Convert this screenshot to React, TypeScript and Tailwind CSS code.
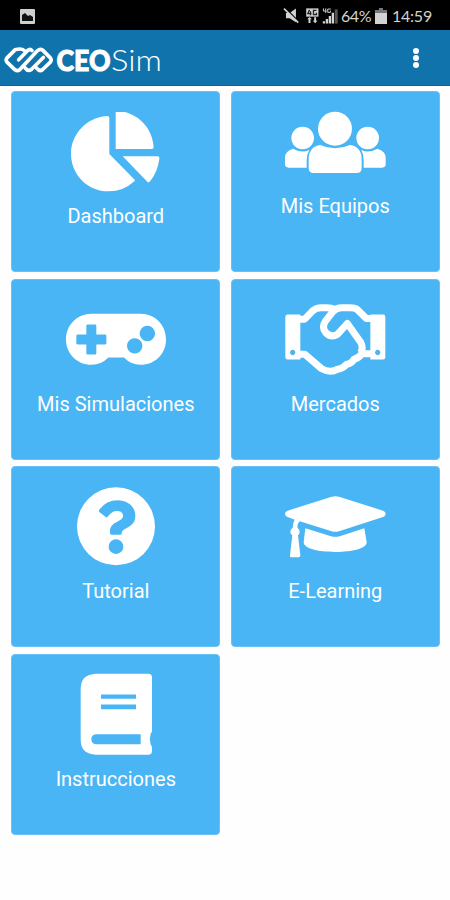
import type { ReactNode } from "react";

interface MenuItem {
  label: string;
  icon: ReactNode;
}

/* ================= MENU ICONS ================= */

const PieIcon = () => (
  <svg viewBox="197 82 300 240" className="h-20 w-[100px] fill-white">
    <path d="M327 99 V208 L403 285 Q405 288 402 290 Q370 320 325 320 C262 320 212 270 212 207 C212 148 260 98 319 94 Q327 94 327 99Z" />
    <path d="M346 84 Q347 78 354 79 C412 84 456 128 460 187 Q460 193 454 193 H346Z" />
    <path d="M367 215 H471 Q478 215 477 222 Q472 263 448 291 Q445 295 441 291Z" />
  </svg>
);

const UsersIcon = () => (
  <svg viewBox="180 80 300 210" className="h-[70px] w-[100px] overflow-visible fill-white">
    <circle cx="233" cy="158" r="34" />
    <circle cx="428" cy="158" r="34" />
    <circle cx="330" cy="130" r="51" />
    <path d="M204 190 Q233 206 253 193 Q245 208 245 225 V247 H191 Q180 247 180 237 V217 Q180 197 204 190Z" />
    <path d="M457 190 Q428 206 409 193 Q416 208 416 225 V247 H471 Q482 247 482 237 V217 Q482 197 457 190Z" />
    <path d="M286 179 Q330 199 375 179 Q410 184 410 222 V248 Q410 263 395 263 H266 Q251 263 251 248 V222 Q251 184 286 179Z" />
  </svg>
);

const GamepadIcon = () => (
  <svg viewBox="197 73.5 300 240" className="h-20 w-[100px]">
    <path
      fillRule="evenodd"
      className="fill-white"
      d="M273 115 H421 C464 115 497 149 497 192 C497 235 464 268 421 268 Q392 268 371 246 H324 Q303 268 273 268 C231 268 197 235 197 192 C197 149 231 115 273 115Z M262 147 Q258 147 258 151 V177 H232 Q228 177 228 181 V203 Q228 207 232 207 H258 V233 Q258 237 262 237 H284 Q288 237 288 233 V207 H314 Q318 207 318 203 V181 Q318 177 314 177 H288 V151 Q288 147 284 147Z M403 188 a23 23 0 1 0 .1 0Z M441 151 a23 23 0 1 0 .1 0Z"
    />
  </svg>
);

const HandshakeIcon = () => (
  <svg viewBox="180 73.5 300 240" className="h-20 w-[100px] overflow-visible">
    <path
      fillRule="evenodd"
      className="fill-white"
      d="M188 117 H226 V252 H188 Q181 252 181 245 V124 Q181 117 188 117Z M203 223 a8 8 0 1 0 .1 0Z M474 117 H436 V252 H474 Q481 252 481 245 V124 Q481 117 474 117Z M458 223 a8 8 0 1 0 .1 0Z"
    />
    <g className="fill-none stroke-white" strokeWidth="21" strokeLinejoin="round">
      <path d="M222 131 H239 L263 106 Q274 97 288 97 H306 Q319 97 329 102" />
      <path d="M440 129 H424 L399 104 Q391 97 376 97 H350 Q334 97 323 109 L302 136 Q289 155 302 171 Q318 188 338 176 L367 144 L407 200 Q416 217 407 232" />
      <path d="M440 235 H410 Q402 248 387 251 Q382 263 364 267 Q354 279 338 281 Q315 294 289 279 L239 236 H222" />
    </g>
  </svg>
);

const QuestionIcon = () => (
  <svg viewBox="197 82 300 240" className="h-20 w-[100px]">
    <circle cx="347" cy="200" r="117" className="fill-white" />
    <path
      className="fill-[#49b5f5]"
      d="M297 157 Q294 153 298 149 Q318 122 352 122 C382 122 405 141 405 168 C405 207 364 201 364 222 Q364 225 359 225 H334 Q329 225 329 220 V216 C329 183 368 188 368 168 C368 158 360 154 348 154 Q335 154 322 171 Q319 175 315 171Z"
    />
    <circle cx="347" cy="261" r="22" className="fill-[#49b5f5]" />
  </svg>
);

const GraduationIcon = () => (
  <svg viewBox="180 81 300 240" className="h-20 w-[100px] overflow-visible fill-white">
    <path d="M320 110 Q331 107 342 110 L474 152 Q482 155 482 161 Q482 168 474 171 L342 214 Q331 217 320 214 L224 184 Q217 190 217 203 Q224 208 224 215 Q224 222 219 226 L226 286 Q226 292 221 292 H199 Q194 292 195 286 L202 226 Q196 222 196 215 Q196 207 203 203 Q203 189 209 179 L188 171 Q180 168 180 161 Q180 155 188 152Z" />
    <path d="M241 205 L318 229 Q331 232 344 229 L418 205 L425 247 C425 266 382 276 331 276 C278 276 236 265 236 247Z" />
  </svg>
);

const BookIcon = () => (
  <svg viewBox="197 89.5 300 240" className="h-20 w-[100px] overflow-visible">
    <path
      fillRule="evenodd"
      className="fill-white"
      d="M287 86 H444 Q455 86 455 97 V257 Q455 262 451 266 Q446 282 451 298 Q455 302 455 309 V317 Q455 329 444 329 H287 Q241 327 241 284 V131 Q241 88 287 86Z M302 148 V161 H407 V148Z M302 178 V192 H407 V178Z M287 267 Q273 268 273 282 Q273 296 287 297 H421 V267Z"
    />
  </svg>
);

const items: MenuItem[] = [
  { label: "Dashboard", icon: <PieIcon /> },
  { label: "Mis Equipos", icon: <UsersIcon /> },
  { label: "Mis Simulaciones", icon: <GamepadIcon /> },
  { label: "Mercados", icon: <HandshakeIcon /> },
  { label: "Tutorial", icon: <QuestionIcon /> },
  { label: "E-Learning", icon: <GraduationIcon /> },
  { label: "Instrucciones", icon: <BookIcon /> },
];

/* ================= STATUS BAR ================= */

const StatusBar = () => (
  <div className="flex h-[30px] items-center bg-black pl-5 pr-[18px] pt-0.5 font-['Lato',sans-serif] text-[16px] leading-none text-[#d2d2d2]">
    <svg viewBox="0 0 15 15" className="h-[15px] w-[15px]">
      <rect width="15" height="15" rx="1" fill="#cfcfcf" />
      <path d="M2 12 V6 L5 4 L8 7 L10 6 L13 8 V12Z" fill="#111" />
    </svg>
    <svg viewBox="168 20 172 54" className="ml-auto h-[18px] w-[57px]" fill="#d2d2d2">
      <path d="M177 38 H188 L207 24 V66 L188 54 H177Z" />
      <path d="M174 23 L215 64" stroke="#000" strokeWidth="5" />
      <path d="M171 25 L214 67" stroke="#d2d2d2" strokeWidth="5" />
      <rect x="238" y="24" width="37" height="25" />
      <path d="M248 28 L243 40 H254 M251 33 V45 M269 30 H260 V43 H269 V37" fill="none" stroke="#222" strokeWidth="4" />
      <path d="M241 57 L248 50 L255 57 H251 V68 H245 V57Z M258 61 H262 V51 H268 V61 H272 L265 69Z" />
      <path d="M290 24 V32 H299 M297 24 V38 M312 26 H303 V36 H311 V31" fill="none" stroke="#d2d2d2" strokeWidth="3" />
      <path d="M288 70 V63 H295 V70Z M297 70 V56 H304 V70Z M306 70 V47 H313 V70Z M315 70 V37 H322 V70Z" />
      <path d="M324 70 V27 H333 V70Z" fill="#555" />
    </svg>
    <span className="ml-[1px] w-[34px] tracking-[-0.3px]">64%</span>
    <svg viewBox="0 0 12 16" className="h-4 w-3">
      <path d="M4 0 H8 V2 H12 V6 H0 V2 H4Z" fill="#777" />
      <path d="M0 5 H12 V16 H0Z" fill="#d2d2d2" />
    </svg>
    <span className="ml-[5px] tracking-[-0.2px]">14:59</span>
  </div>
);

/* ================= HEADER ================= */

const Header = () => (
  <header className="flex h-14 items-center justify-between border-b border-[#0a6399] bg-[#1073ab] pl-1 pr-[31px] pt-1">
    <svg viewBox="4 41.5 160 36" className="h-9 w-40 fill-white">
      <g
        transform="scale(.33333)"
        className="fill-none stroke-white"
        strokeWidth="11"
        strokeLinejoin="round"
        strokeLinecap="round"
      >
        <path d="M73 150 Q64 142 45 148 L21 172 Q16 179 21 185 L45 208 Q52 213 59 208 L112 151 Q120 144 128 149 L151 172 Q156 179 151 185 L128 207 Q121 213 114 207 L108 201" />
        <path d="M56 178 L83 150 Q90 144 96 150 M75 202 Q84 214 94 207 L130 171" />
      </g>
      <text
        x="56.5"
        y="70"
        textLength="54"
        lengthAdjust="spacingAndGlyphs"
        className="stroke-white stroke-[1px] font-['Lato',sans-serif] text-[28px] font-black"
      >
        CEO
      </text>
      <text
        x="111"
        y="70"
        textLength="51"
        lengthAdjust="spacingAndGlyphs"
        className="font-['Lato',sans-serif] text-[29px] font-light"
      >
        Sim
      </text>
    </svg>
    <button aria-label="Menu" className="flex flex-col gap-px pb-[3px]">
      <span className="h-1.5 w-1.5 rounded-full bg-white" />
      <span className="h-1.5 w-1.5 rounded-full bg-white" />
      <span className="h-1.5 w-1.5 rounded-full bg-white" />
    </button>
  </header>
);

export default function App() {
  return (
    <div className="min-h-screen bg-[#fefefe] font-['Roboto',sans-serif]">
      <StatusBar />
      <Header />

      <main className="grid grid-cols-[209px_209px] gap-x-[10.5px] gap-y-[6.5px] pl-[11.3px] pt-[5.3px]">
        {items.map((item) => (
          <button
            key={item.label}
            className="flex h-[181px] flex-col items-center rounded-[4px] border border-[#69c1f5] bg-[#49b5f5] pt-5 text-white"
          >
            {item.icon}
            <span className="mt-3 text-[20px] leading-6">{item.label}</span>
          </button>
        ))}
      </main>
    </div>
  );
}
